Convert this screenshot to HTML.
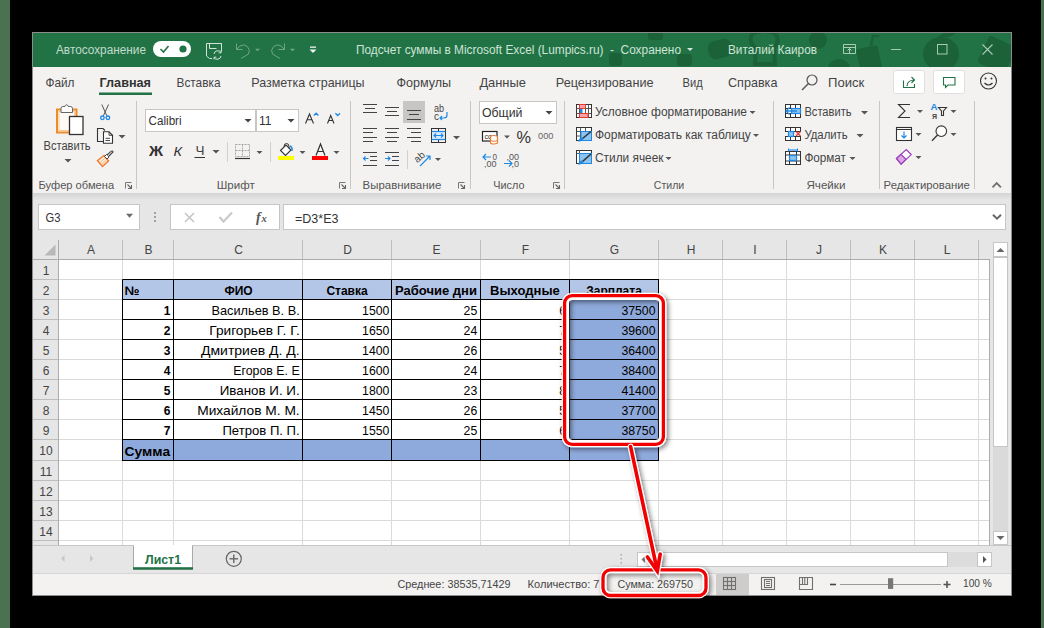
<!DOCTYPE html>
<html><head><meta charset="utf-8"><style>
*{margin:0;padding:0}
html,body{width:1044px;height:628px;overflow:hidden;background:#000}
svg{display:block;font-family:"Liberation Sans",sans-serif}
</style></head><body>
<svg width="1044" height="628" viewBox="0 0 1044 628">
<rect x="0" y="0" width="1044" height="628" fill="#000"/>
<rect x="0" y="0" width="10" height="628" fill="#4a7150"/>
<rect x="1041" y="0" width="3" height="628" fill="#4a7150"/>
<rect x="32" y="32" width="980" height="564" fill="#f3f2f1"/>
<rect x="32.5" y="32.5" width="979" height="563" fill="none" stroke="#8c8c8c"/>
<rect x="33" y="33" width="978" height="34" fill="#217346"/>
<defs><clipPath id="tb"><rect x="33" y="33" width="978" height="34"/></clipPath></defs>
<g clip-path="url(#tb)" fill="#1c6239" opacity="1">
<ellipse cx="941" cy="54" rx="18" ry="17"/>
<path d="M938 37 q8 -7 18 -4 q-6 6 -18 4z"/>
<rect x="858" y="47" width="22" height="24" rx="2" transform="rotate(-12 869 58)"/>
<path d="M871 46 l2 -10 h6" fill="none" stroke="#1c6239" stroke-width="2.5"/>
<ellipse cx="839" cy="68" rx="11" ry="9"/>
<rect x="982" y="40" width="30" height="30" rx="3" transform="rotate(25 997 55)"/>
<circle cx="818" cy="40" r="9"/>
<path d="M752 34 q12 -6 24 0 q4 8 -2 14 l1 16 h-20 l1 -16 q-8 -6 -4 -14z" fill="none" stroke="#1c6239" stroke-width="4"/>
<rect x="708" y="40" width="24" height="18" rx="7" transform="rotate(-15 720 49)"/>
<rect x="648" y="30" width="15" height="10" rx="3"/>
<rect x="677" y="54" width="15" height="12" rx="3"/>
<rect x="609" y="53" width="13" height="13" rx="3"/>
</g>
<text x="56.0" y="53.6" font-size="12" fill="#c3dacb" textLength="90.0" lengthAdjust="spacingAndGlyphs">Автосохранение</text>
<rect x="153" y="41" width="38" height="16" rx="8" fill="#fff"/>
<path d="M160.5 49 L163.5 52 L168.5 46" fill="none" stroke="#217346" stroke-width="1.6"/>
<circle cx="183" cy="49" r="3.6" fill="#217346"/>
<path d="M206.5 52 V43.5 H221.5 V51.5 M206.5 52 V56 L209.5 58.5 H212" fill="none" stroke="#cfe3d6" stroke-width="1"/>
<path d="M209.5 43.5 V48.5 H216.5" fill="none" stroke="#cfe3d6" stroke-width="1"/>
<path d="M221.5 43.5 V48.5" fill="none" stroke="#cfe3d6" stroke-width="1"/>
<path d="M214 54 a3.8 3.8 0 0 1 7 -1.5 M221 50.5 v2.3 h-2.3 M221 56 a3.8 3.8 0 0 1 -7 1.5 M214 59.5 v-2.3 h2.3" fill="none" stroke="#cfe3d6" stroke-width="1"/>
<path d="M236.5 43.5 V49.5 H242.5" fill="none" stroke="#6fa688" stroke-width="1"/>
<path d="M237 49 L240 46 A6 6 0 0 1 248.5 54 L241 58.5" fill="none" stroke="#6fa688" stroke-width="1"/>
<path d="M255 48.8 h5 l-2.5 2.5 z" fill="#6fa688" stroke="none" stroke-width="1"/>
<path d="M284.5 43.5 V49.5 H278.5" fill="none" stroke="#6fa688" stroke-width="1"/>
<path d="M284 49 L281 46 A6 6 0 0 0 272.5 54 L280 58.5" fill="none" stroke="#6fa688" stroke-width="1"/>
<path d="M290 48.8 h5 l-2.5 2.5 z" fill="#6fa688" stroke="none" stroke-width="1"/>
<rect x="310" y="46.5" width="6" height="1.3" fill="#eef5f0"/>
<path d="M309.5 49.5 h7 l-3.5 3.5 z" fill="#eef5f0" stroke="none" stroke-width="1"/>
<text x="356.0" y="53.6" font-size="12" fill="#cfe3d6" textLength="325.0" lengthAdjust="spacingAndGlyphs">Подсчет суммы в Microsoft Excel (Lumpics.ru)  -  Сохранено</text>
<path d="M687 48 h6 l-3 3 z" fill="#d7e6dc" stroke="none" stroke-width="1"/>
<text x="728.0" y="53.6" font-size="12" fill="#cfe3d6" textLength="89.0" lengthAdjust="spacingAndGlyphs">Виталий Каиров</text>
<path d="M843.5 44.5 h12 v9 h-12 z M843.5 47.5 h12" fill="none" stroke="#a9cab5" stroke-width="1"/>
<path d="M849.5 53 v-4.5 M847.5 50.5 l2 -2 l2 2" fill="none" stroke="#a9cab5" stroke-width="1"/>
<line x1="891" y1="49.5" x2="901" y2="49.5" stroke="#a9cab5" stroke-width="1"/>
<rect x="937.5" y="44.5" width="9.5" height="9.5" fill="none" stroke="#a9cab5"/>
<path d="M982.5 44.5 l10 10 M992.5 44.5 l-10 10" fill="none" stroke="#a9cab5" stroke-width="1.1"/>
<text x="45.5" y="87.0" font-size="13" fill="#444" textLength="29.0" lengthAdjust="spacingAndGlyphs">Файл</text>
<text x="99.5" y="87.0" font-size="13" fill="#333" font-weight="bold" textLength="51.5" lengthAdjust="spacingAndGlyphs">Главная</text>
<rect x="99" y="92.5" width="53" height="2.5" fill="#217346"/>
<text x="176.5" y="87.0" font-size="13" fill="#444" textLength="44.0" lengthAdjust="spacingAndGlyphs">Вставка</text>
<text x="251.3" y="87.0" font-size="13" fill="#444" textLength="113.3" lengthAdjust="spacingAndGlyphs">Разметка страницы</text>
<text x="396.4" y="87.0" font-size="13" fill="#444" textLength="54.6" lengthAdjust="spacingAndGlyphs">Формулы</text>
<text x="479.4" y="87.0" font-size="13" fill="#444" textLength="46.5" lengthAdjust="spacingAndGlyphs">Данные</text>
<text x="555.8" y="87.0" font-size="13" fill="#444" textLength="97.7" lengthAdjust="spacingAndGlyphs">Рецензирование</text>
<text x="682.6" y="87.0" font-size="13" fill="#444" textLength="20.2" lengthAdjust="spacingAndGlyphs">Вид</text>
<text x="728.0" y="87.0" font-size="13" fill="#444" textLength="49.4" lengthAdjust="spacingAndGlyphs">Справка</text>
<circle cx="812" cy="80" r="5" fill="none" stroke="#555" stroke-width="1.2"/>
<line x1="808.5" y1="83.5" x2="802" y2="90" stroke="#555" stroke-width="1.4"/>
<text x="828.0" y="87.0" font-size="13" fill="#444" textLength="36.3" lengthAdjust="spacingAndGlyphs">Поиск</text>
<rect x="893.5" y="70.5" width="31" height="23" rx="2" fill="#fff" stroke="#e1dfdd"/>
<rect x="933.5" y="70.5" width="31" height="23" rx="2" fill="#fff" stroke="#e1dfdd"/>
<path d="M903.5 80.5 v7 h11 v-3.5" fill="none" stroke="#217346" stroke-width="1.1"/>
<path d="M907 86 q0.5 -6 7.5 -6 M911.5 77 l3 3 l-3 3" fill="none" stroke="#217346" stroke-width="1.1"/>
<path d="M943.5 77.5 h11.5 v7.5 h-7 l-2.5 2.5 v-2.5 h-2 z" fill="none" stroke="#217346" stroke-width="1.1"/>
<circle cx="988.5" cy="81" r="8" fill="none" stroke="#333" stroke-width="1.1"/>
<circle cx="985.5" cy="78.5" r="1" fill="#333"/><circle cx="991.5" cy="78.5" r="1" fill="#333"/>
<path d="M984.5 83 q4 4 8 0" fill="none" stroke="#333" stroke-width="1.1"/>
<line x1="136.5" y1="101" x2="136.5" y2="189" stroke="#c8c6c4" stroke-width="1"/>
<line x1="350.5" y1="101" x2="350.5" y2="189" stroke="#c8c6c4" stroke-width="1"/>
<line x1="470.5" y1="101" x2="470.5" y2="189" stroke="#c8c6c4" stroke-width="1"/>
<line x1="564.5" y1="101" x2="564.5" y2="189" stroke="#c8c6c4" stroke-width="1"/>
<line x1="773.5" y1="101" x2="773.5" y2="189" stroke="#c8c6c4" stroke-width="1"/>
<line x1="879.5" y1="101" x2="879.5" y2="189" stroke="#c8c6c4" stroke-width="1"/>
<line x1="974.5" y1="101" x2="974.5" y2="189" stroke="#c8c6c4" stroke-width="1"/>
<text x="38.5" y="189.0" font-size="11" fill="#555" textLength="75.6" lengthAdjust="spacingAndGlyphs">Буфер обмена</text>
<text x="216.7" y="189.0" font-size="11" fill="#555" textLength="38.0" lengthAdjust="spacingAndGlyphs">Шрифт</text>
<text x="362.6" y="189.0" font-size="11" fill="#555" textLength="78.7" lengthAdjust="spacingAndGlyphs">Выравнивание</text>
<text x="493.3" y="189.0" font-size="11" fill="#555" textLength="31.2" lengthAdjust="spacingAndGlyphs">Число</text>
<text x="653.8" y="189.0" font-size="11" fill="#555" textLength="30.5" lengthAdjust="spacingAndGlyphs">Стили</text>
<text x="806.4" y="189.0" font-size="11" fill="#555" textLength="39.1" lengthAdjust="spacingAndGlyphs">Ячейки</text>
<text x="883.6" y="189.0" font-size="11" fill="#555" textLength="86.3" lengthAdjust="spacingAndGlyphs">Редактирование</text>
<path d="M125.5 188.5 V182.5 H131.5" fill="none" stroke="#777" stroke-width="1"/>
<path d="M127.5 184.5 L131 188 M131.5 185 V188.5 H128" fill="none" stroke="#666" stroke-width="1.1"/>
<path d="M339.5 188.5 V182.5 H345.5" fill="none" stroke="#777" stroke-width="1"/>
<path d="M341.5 184.5 L345 188 M345.5 185 V188.5 H342" fill="none" stroke="#666" stroke-width="1.1"/>
<path d="M458.5 188.5 V182.5 H464.5" fill="none" stroke="#777" stroke-width="1"/>
<path d="M460.5 184.5 L464 188 M464.5 185 V188.5 H461" fill="none" stroke="#666" stroke-width="1.1"/>
<path d="M553.5 188.5 V182.5 H559.5" fill="none" stroke="#777" stroke-width="1"/>
<path d="M555.5 184.5 L559 188 M559.5 185 V188.5 H556" fill="none" stroke="#666" stroke-width="1.1"/>
<path d="M992.5 187.3 l4.2 -4.2 l4.2 4.2" fill="none" stroke="#707070" stroke-width="1.8"/>
<rect x="57" y="109.5" width="19.5" height="23" fill="#fefaf4" stroke="#ed8b29" stroke-width="2"/>
<rect x="59" y="111.5" width="15.5" height="19" fill="none" stroke="#f9c98f" stroke-width="1"/>
<path d="M61 112.5 v-4 q0 -2 2 -2 h2 a1.6 1.6 0 0 1 3.2 0 h2.3 q2 0 2 2 v4 z" fill="#fff" stroke="#666" stroke-width="1"/>
<rect x="69.5" y="116.5" width="13.5" height="18" fill="#fff" stroke="#333" stroke-width="1.3"/>
<text x="43.5" y="150.0" font-size="12" fill="#444" textLength="47.0" lengthAdjust="spacingAndGlyphs">Вставить</text>
<path d="M64.5 159 h7 l-3.5 3.5 z" fill="#555" stroke="none" stroke-width="1"/>
<path d="M101.8 104.5 L106.8 115.8 M108.5 104.5 L103.4 115.8" fill="none" stroke="#555" stroke-width="1"/>
<circle cx="102.4" cy="117.8" r="1.8" fill="none" stroke="#1e88e5" stroke-width="1.3"/>
<circle cx="107.9" cy="117.8" r="1.8" fill="none" stroke="#1e88e5" stroke-width="1.3"/>
<path d="M103.5 141.5 h-6 v-13 h5.5 l2 2" fill="none" stroke="#333" stroke-width="1.1"/>
<path d="M103.5 131.8 h5.5 l3.5 3.5 v8 h-9 z" fill="#fff" stroke="#333" stroke-width="1.1"/>
<path d="M109 131.8 v3.5 h3.5" fill="none" stroke="#333" stroke-width="0.9"/>
<line x1="105.5" y1="138.3" x2="110" y2="138.3" stroke="#333" stroke-width="0.9"/>
<line x1="105.5" y1="140.5" x2="110" y2="140.5" stroke="#333" stroke-width="0.9"/>
<path d="M118.5 135 h7 l-3.5 3.5 z" fill="#555" stroke="none" stroke-width="1"/>
<path d="M97.5 160.5 L104 155.5 L108.5 161 L102.5 166.5 Z" fill="#fde9d2" stroke="#ed7d31" stroke-width="1.4"/>
<path d="M100.5 162 L104.5 158.5 M102 164 L106 160.5" fill="none" stroke="#f4b183" stroke-width="0.9"/>
<path d="M104.5 156.5 L106.5 154.5 L109 157 L107 159 Z" fill="#fff" stroke="#444" stroke-width="1"/>
<path d="M107 155 L111.3 151.2 Q112.8 150.6 113 152 L108.5 156.5" fill="#fff" stroke="#444" stroke-width="1.1"/>
<rect x="145.5" y="109.5" width="110" height="22" fill="#fff" stroke="#c8c6c4"/>
<rect x="256.5" y="109.5" width="42" height="22" fill="#fff" stroke="#c8c6c4"/>
<text x="148.6" y="125.0" font-size="12" fill="#333" textLength="33.0" lengthAdjust="spacingAndGlyphs">Calibri</text>
<text x="259.0" y="125.0" font-size="12" fill="#333" textLength="12.5" lengthAdjust="spacingAndGlyphs">11</text>
<path d="M244.5 119 h7 l-3.5 3.5 z" fill="#444" stroke="none" stroke-width="1"/>
<path d="M287.5 119 h7 l-3.5 3.5 z" fill="#444" stroke="none" stroke-width="1"/>
<path d="M305.5 123.5 L309.5 114 L313.5 123.5 M307 119.8 H312" fill="none" stroke="#333" stroke-width="1.1"/>
<path d="M313.8 115.5 l2.3 -2.3 l2.3 2.3" fill="none" stroke="#1e88e5" stroke-width="1.3"/>
<path d="M327.5 123.5 L330.7 115.5 L334 123.5 M328.7 120.5 H332.7" fill="none" stroke="#333" stroke-width="1.1"/>
<path d="M335.4 113.2 l2.3 2.3 l2.3 -2.3" fill="none" stroke="#1e88e5" stroke-width="1.3"/>
<text x="149.0" y="156.0" font-size="14" fill="#333" font-weight="bold" textLength="14.0" lengthAdjust="spacingAndGlyphs">Ж</text>
<text x="173.5" y="156.0" font-size="13.5" fill="#333" textLength="8.5" lengthAdjust="spacingAndGlyphs" font-style="italic">К</text>
<text x="195.5" y="154.5" font-size="13" fill="#444" textLength="9.0" lengthAdjust="spacingAndGlyphs">Ч</text>
<line x1="194.5" y1="157.5" x2="205" y2="157.5" stroke="#333" stroke-width="1"/>
<path d="M212.5 150 h7 l-3.5 3.5 z" fill="#555" stroke="none" stroke-width="1"/>
<line x1="227.5" y1="142" x2="227.5" y2="162" stroke="#d2d0ce" stroke-width="1"/>
<rect x="235.5" y="144.5" width="14" height="12" fill="none" stroke="#a6a6a6" stroke-dasharray="2 1"/>
<line x1="242.5" y1="144.5" x2="242.5" y2="156.5" stroke="#a6a6a6" stroke-width="1" stroke-dasharray="2 1"/>
<line x1="235.5" y1="150.5" x2="249.5" y2="150.5" stroke="#a6a6a6" stroke-width="1" stroke-dasharray="2 1"/>
<line x1="235" y1="158.5" x2="250" y2="158.5" stroke="#333" stroke-width="1.2"/>
<path d="M256.5 151 h6 l-3 3 z" fill="#555" stroke="none" stroke-width="1"/>
<line x1="270.5" y1="142" x2="270.5" y2="162" stroke="#d2d0ce" stroke-width="1"/>
<path d="M280.5 150.5 L286 145 L291 150 L285.5 155.5 Z" fill="#fff" stroke="#333" stroke-width="1.1"/>
<path d="M284 146.5 q0 -3 2.5 -3 q2.5 0 2.5 3 v2" fill="none" stroke="#333" stroke-width="1"/>
<path d="M290 146 q2.5 1 2 5" fill="none" stroke="#1e88e5" stroke-width="1.5"/>
<rect x="278" y="156" width="16" height="4" fill="#ffff00"/>
<path d="M299.5 151 h6 l-3 3 z" fill="#555" stroke="none" stroke-width="1"/>
<path d="M316 155.5 L320.5 144 L325 155.5 M317.5 151.5 H323.5" fill="none" stroke="#333" stroke-width="1.2"/>
<rect x="312" y="156" width="16" height="4" fill="#ff0000"/>
<path d="M333.5 151 h6 l-3 3 z" fill="#555" stroke="none" stroke-width="1"/>
<line x1="363" y1="104.5" x2="377" y2="104.5" stroke="#444" stroke-width="1"/>
<line x1="365" y1="108.5" x2="375" y2="108.5" stroke="#444" stroke-width="1"/>
<line x1="363" y1="112.5" x2="377" y2="112.5" stroke="#444" stroke-width="1"/>
<line x1="385" y1="107.5" x2="399" y2="107.5" stroke="#444" stroke-width="1"/>
<line x1="387" y1="111.5" x2="397" y2="111.5" stroke="#444" stroke-width="1"/>
<line x1="385" y1="115.5" x2="399" y2="115.5" stroke="#444" stroke-width="1"/>
<rect x="403" y="101" width="22" height="22" fill="#c8c6c4"/>
<line x1="407" y1="110.5" x2="421" y2="110.5" stroke="#444" stroke-width="1"/>
<line x1="409" y1="114.5" x2="419" y2="114.5" stroke="#444" stroke-width="1"/>
<line x1="407" y1="119.5" x2="421" y2="119.5" stroke="#444" stroke-width="1"/>
<text x="434.0" y="112.0" font-size="10" fill="#444" textLength="10.0" lengthAdjust="spacingAndGlyphs">ab</text>
<text x="434.0" y="120.0" font-size="10" fill="#444" textLength="5.0" lengthAdjust="spacingAndGlyphs">c</text>
<path d="M447 112 v3 q0 3 -3 3 h-4 M442 116 l-2 2 l2 2" fill="none" stroke="#1e88e5" stroke-width="1.2"/>
<line x1="363" y1="128.5" x2="377" y2="128.5" stroke="#444" stroke-width="1"/>
<line x1="363" y1="132.5" x2="373" y2="132.5" stroke="#444" stroke-width="1"/>
<line x1="363" y1="137.5" x2="377" y2="137.5" stroke="#444" stroke-width="1"/>
<line x1="363" y1="141.5" x2="373" y2="141.5" stroke="#444" stroke-width="1"/>
<line x1="385" y1="128.5" x2="399" y2="128.5" stroke="#444" stroke-width="1"/>
<line x1="387" y1="132.5" x2="397" y2="132.5" stroke="#444" stroke-width="1"/>
<line x1="385" y1="137.5" x2="399" y2="137.5" stroke="#444" stroke-width="1"/>
<line x1="387" y1="141.5" x2="397" y2="141.5" stroke="#444" stroke-width="1"/>
<line x1="407" y1="128.5" x2="421" y2="128.5" stroke="#444" stroke-width="1"/>
<line x1="411" y1="132.5" x2="421" y2="132.5" stroke="#444" stroke-width="1"/>
<line x1="407" y1="137.5" x2="421" y2="137.5" stroke="#444" stroke-width="1"/>
<line x1="411" y1="141.5" x2="421" y2="141.5" stroke="#444" stroke-width="1"/>
<rect x="432" y="131.5" width="13.5" height="8" fill="#d6eaf8"/>
<rect x="431.5" y="128.5" width="14" height="14" fill="none" stroke="#333" stroke-width="1"/>
<line x1="431.5" y1="131.5" x2="445.5" y2="131.5" stroke="#1e88e5" stroke-width="1.2"/>
<line x1="431.5" y1="139.5" x2="445.5" y2="139.5" stroke="#1e88e5" stroke-width="1.2"/>
<line x1="438.5" y1="128.5" x2="438.5" y2="131" stroke="#333" stroke-width="1"/>
<line x1="438.5" y1="140" x2="438.5" y2="142.5" stroke="#333" stroke-width="1"/>
<path d="M434 135.5 h9 M436 133.5 l-2 2 l2 2 M441 133.5 l2 2 l-2 2" fill="none" stroke="#1e88e5" stroke-width="1.1"/>
<path d="M453 136 h7 l-3.5 3.5 z" fill="#555" stroke="none" stroke-width="1"/>
<line x1="363" y1="152.5" x2="377" y2="152.5" stroke="#444" stroke-width="1"/>
<line x1="370" y1="156.5" x2="377" y2="156.5" stroke="#444" stroke-width="1"/>
<line x1="370" y1="160.5" x2="377" y2="160.5" stroke="#444" stroke-width="1"/>
<line x1="363" y1="165.5" x2="377" y2="165.5" stroke="#444" stroke-width="1"/>
<path d="M368.5 158.5 h-5 M365.5 156.5 l-2 2 l2 2" fill="none" stroke="#1e88e5" stroke-width="1.1"/>
<line x1="385" y1="152.5" x2="399" y2="152.5" stroke="#444" stroke-width="1"/>
<line x1="392" y1="156.5" x2="399" y2="156.5" stroke="#444" stroke-width="1"/>
<line x1="392" y1="160.5" x2="399" y2="160.5" stroke="#444" stroke-width="1"/>
<line x1="385" y1="165.5" x2="399" y2="165.5" stroke="#444" stroke-width="1"/>
<path d="M385 158.5 h5 M388 156.5 l2 2 l-2 2" fill="none" stroke="#1e88e5" stroke-width="1.1"/>
<line x1="407.5" y1="150" x2="407.5" y2="169" stroke="#d2d0ce" stroke-width="1"/>
<text x="414" y="160" font-size="10" fill="#444" transform="rotate(-40 420 157)">ab</text>
<path d="M420 166 l10 -10 M426 156 h4 v4" fill="none" stroke="#1e88e5" stroke-width="1.2"/>
<path d="M435 158 h6 l-3 3 z" fill="#555" stroke="none" stroke-width="1"/>
<rect x="479.5" y="101.5" width="77" height="22" fill="#fff" stroke="#c8c6c4"/>
<text x="482.0" y="117.0" font-size="12" fill="#333" textLength="40.5" lengthAdjust="spacingAndGlyphs">Общий</text>
<path d="M545.5 111 h7 l-3.5 3.5 z" fill="#444" stroke="none" stroke-width="1"/>
<rect x="482.5" y="131.5" width="14.5" height="9.5" fill="#fff" stroke="#222" stroke-width="1.2"/>
<text x="484.5" y="139.0" font-size="8" fill="#222" textLength="11.0" lengthAdjust="spacingAndGlyphs">cco</text>
<path d="M490.5 137 a3.5 1.5 0 0 1 7 0 v5.5 a3.5 1.5 0 0 1 -7 0 z" fill="#fff" stroke="#ed7d31" stroke-width="1.2"/>
<path d="M490.5 139.8 a3.5 1.5 0 0 0 7 0" fill="none" stroke="#ed7d31" stroke-width="1"/>
<path d="M504 135.5 h6 l-3 3 z" fill="#555" stroke="none" stroke-width="1"/>
<text x="516.5" y="142.5" font-size="16" fill="#333" textLength="14.5" lengthAdjust="spacingAndGlyphs">%</text>
<text x="538.0" y="139.0" font-size="9" fill="#666" textLength="15.5" lengthAdjust="spacingAndGlyphs">000</text>
<path d="M491 157 h-8 M486 154 l-3 3 l3 3" fill="none" stroke="#1e88e5" stroke-width="1.2"/>
<text x="492.5" y="159.5" font-size="9" fill="#555" textLength="4.5" lengthAdjust="spacingAndGlyphs">0</text>
<text x="484.0" y="167.0" font-size="9" fill="#555" textLength="12.5" lengthAdjust="spacingAndGlyphs">,00</text>
<text x="506.5" y="159.5" font-size="9" fill="#555" textLength="12.5" lengthAdjust="spacingAndGlyphs">,00</text>
<path d="M504 163.5 h8 M509 160.5 l3 3 l-3 3" fill="none" stroke="#1e88e5" stroke-width="1.2"/>
<text x="511.5" y="167.0" font-size="9" fill="#555" textLength="7.5" lengthAdjust="spacingAndGlyphs">,0</text>
<rect x="576.5" y="104.5" width="15" height="13" fill="#fff" stroke="#333" stroke-width="1"/>
<line x1="579.5" y1="104.5" x2="579.5" y2="117.5" stroke="#555" stroke-width="1"/>
<line x1="585.5" y1="104.5" x2="585.5" y2="117.5" stroke="#555" stroke-width="1"/>
<line x1="588.5" y1="104.5" x2="588.5" y2="117.5" stroke="#555" stroke-width="1"/>
<line x1="576.5" y1="108.5" x2="591.5" y2="108.5" stroke="#555" stroke-width="1"/>
<line x1="576.5" y1="113.5" x2="591.5" y2="113.5" stroke="#555" stroke-width="1"/>
<rect x="579.5" y="104.5" width="6" height="4" fill="#f5a3a3" stroke="#e53935" stroke-width="1"/>
<rect x="579.5" y="113.5" width="8.5" height="4" fill="#f5a3a3" stroke="#e53935" stroke-width="1"/>
<rect x="580" y="109" width="2.5" height="4" fill="#1e88e5"/>
<text x="595.0" y="116.3" font-size="12" fill="#444" textLength="152.0" lengthAdjust="spacingAndGlyphs">Условное форматирование</text>
<path d="M749.5 111 h6 l-3 3 z" fill="#555" stroke="none" stroke-width="1"/>
<rect x="576.5" y="127.5" width="15" height="13" fill="#fff" stroke="#333" stroke-width="1"/>
<line x1="580.5" y1="127.5" x2="580.5" y2="140.5" stroke="#555" stroke-width="1"/>
<line x1="585.5" y1="127.5" x2="585.5" y2="140.5" stroke="#555" stroke-width="1"/>
<line x1="576.5" y1="131.5" x2="591.5" y2="131.5" stroke="#555" stroke-width="1"/>
<line x1="576.5" y1="136" x2="591.5" y2="136" stroke="#555" stroke-width="1"/>
<rect x="581" y="131.5" width="10.5" height="9" fill="#8cc3f0" stroke="#1e88e5" stroke-width="1"/>
<path d="M591 131.5 L582 139" fill="none" stroke="#333" stroke-width="1.6"/>
<path d="M578 141.5 q1 -4 4.5 -4 l1 1 q-1 3.5 -5.5 3z" fill="#1e88e5" stroke="none" stroke-width="1"/>
<text x="595.0" y="139.3" font-size="12" fill="#444" textLength="155.8" lengthAdjust="spacingAndGlyphs">Форматировать как таблицу</text>
<path d="M753 134 h6 l-3 3 z" fill="#555" stroke="none" stroke-width="1"/>
<rect x="576.5" y="150.5" width="15" height="13" fill="#fff" stroke="#333" stroke-width="1"/>
<line x1="579.5" y1="150.5" x2="579.5" y2="163.5" stroke="#555" stroke-width="1"/>
<line x1="576.5" y1="153.5" x2="591.5" y2="153.5" stroke="#555" stroke-width="1"/>
<rect x="579.5" y="153.5" width="12" height="10" fill="#8cc3f0" stroke="#1e88e5" stroke-width="1"/>
<path d="M591 154 L582 162" fill="none" stroke="#333" stroke-width="1.6"/>
<path d="M578 164.5 q1 -4 4.5 -4 l1 1 q-1 3.5 -5.5 3z" fill="#1e88e5" stroke="none" stroke-width="1"/>
<text x="595.0" y="162.3" font-size="12" fill="#444" textLength="68.5" lengthAdjust="spacingAndGlyphs">Стили ячеек</text>
<path d="M665.5 157 h6 l-3 3 z" fill="#555" stroke="none" stroke-width="1"/>
<rect x="785.5" y="104.5" width="15" height="13" fill="#fff" stroke="#333" stroke-width="1"/>
<line x1="785.5" y1="108.5" x2="800.5" y2="108.5" stroke="#333" stroke-width="1"/>
<line x1="785.5" y1="113.5" x2="800.5" y2="113.5" stroke="#333" stroke-width="1"/>
<line x1="790.5" y1="104.5" x2="790.5" y2="117.5" stroke="#333" stroke-width="1"/>
<line x1="795.5" y1="104.5" x2="795.5" y2="117.5" stroke="#333" stroke-width="1"/>
<rect x="791.5" y="108.5" width="9" height="5" fill="#8cc3f0" stroke="#1e88e5" stroke-width="1.2"/>
<rect x="786" y="109" width="5" height="4" fill="#fff"/>
<path d="M797 111 h-11 M789.5 107.5 l-3.5 3.5 l3.5 3.5" fill="none" stroke="#1e88e5" stroke-width="1.3"/>
<text x="804.4" y="116.3" font-size="12" fill="#444" textLength="47.2" lengthAdjust="spacingAndGlyphs">Вставить</text>
<path d="M861 111 h7 l-3.5 3.5 z" fill="#555" stroke="none" stroke-width="1"/>
<rect x="785.5" y="127.5" width="15" height="13" fill="#fff" stroke="#333" stroke-width="1"/>
<line x1="785.5" y1="131.5" x2="800.5" y2="131.5" stroke="#333" stroke-width="1"/>
<line x1="785.5" y1="136.5" x2="800.5" y2="136.5" stroke="#333" stroke-width="1"/>
<line x1="790.5" y1="127.5" x2="790.5" y2="131.5" stroke="#333" stroke-width="1"/>
<line x1="795.5" y1="127.5" x2="795.5" y2="131.5" stroke="#333" stroke-width="1"/>
<line x1="790.5" y1="136.5" x2="790.5" y2="140.5" stroke="#333" stroke-width="1"/>
<line x1="795.5" y1="136.5" x2="795.5" y2="140.5" stroke="#333" stroke-width="1"/>
<rect x="785" y="132" width="16" height="4" fill="#f3f2f1"/>
<rect x="788.5" y="131.5" width="5" height="5" fill="#8cc3f0" stroke="#1e88e5" stroke-width="1.2"/>
<path d="M796 131.5 l4.5 4.5 M800.5 131.5 l-4.5 4.5" fill="none" stroke="#e53935" stroke-width="1.2"/>
<text x="804.4" y="139.3" font-size="12" fill="#444" textLength="43.3" lengthAdjust="spacingAndGlyphs">Удалить</text>
<path d="M856.5 134 h7 l-3.5 3.5 z" fill="#555" stroke="none" stroke-width="1"/>
<rect x="785.5" y="151.5" width="15" height="13" fill="#fff" stroke="#333" stroke-width="1"/>
<line x1="785.5" y1="155" x2="800.5" y2="155" stroke="#333" stroke-width="1"/>
<line x1="785.5" y1="161" x2="800.5" y2="161" stroke="#333" stroke-width="1"/>
<line x1="789.5" y1="151.5" x2="789.5" y2="164.5" stroke="#333" stroke-width="1"/>
<line x1="796.5" y1="151.5" x2="796.5" y2="164.5" stroke="#333" stroke-width="1"/>
<rect x="789.5" y="155.5" width="7" height="5" fill="#8cc3f0" stroke="#1e88e5" stroke-width="1.2"/>
<line x1="788.5" y1="150" x2="797.5" y2="150" stroke="#1e88e5" stroke-width="1.1"/>
<line x1="788.5" y1="148.5" x2="788.5" y2="151.5" stroke="#1e88e5" stroke-width="1"/>
<line x1="797.5" y1="148.5" x2="797.5" y2="151.5" stroke="#1e88e5" stroke-width="1"/>
<text x="804.4" y="162.3" font-size="12" fill="#444" textLength="41.6" lengthAdjust="spacingAndGlyphs">Формат</text>
<path d="M849.5 157 h6 l-3 3 z" fill="#555" stroke="none" stroke-width="1"/>
<path d="M910 104.5 H898.5 L905 111 L898.5 117.5 H910" fill="none" stroke="#333" stroke-width="1.1"/>
<path d="M917 110 h6 l-3 3 z" fill="#555" stroke="none" stroke-width="1"/>
<text x="930.5" y="110.0" font-size="8.5" fill="#1e88e5" font-weight="bold" textLength="7.0" lengthAdjust="spacingAndGlyphs">A</text>
<text x="932.0" y="119.0" font-size="8" fill="#444" font-weight="bold" textLength="5.0" lengthAdjust="spacingAndGlyphs">Я</text>
<path d="M938.5 107.5 h8 l-3 3.5 v4.5 h-2 v-4.5 z" fill="none" stroke="#333" stroke-width="1.1"/>
<path d="M950.5 110 h6 l-3 3 z" fill="#555" stroke="none" stroke-width="1"/>
<rect x="896.5" y="127.5" width="15" height="13" fill="#fff" stroke="#333" stroke-width="1.1"/>
<line x1="896.5" y1="129.5" x2="911.5" y2="129.5" stroke="#333" stroke-width="1"/>
<path d="M904 131.5 v6.5 M901.5 135.5 l2.5 2.5 l2.5 -2.5" fill="none" stroke="#1e88e5" stroke-width="1.2"/>
<path d="M915.5 133 h6 l-3 3 z" fill="#555" stroke="none" stroke-width="1"/>
<circle cx="941.3" cy="131.2" r="5.3" fill="#fff" stroke="#333" stroke-width="1.1"/>
<line x1="937.5" y1="135" x2="932" y2="140.8" stroke="#333" stroke-width="1.3"/>
<path d="M950.5 133 h6 l-3 3 z" fill="#555" stroke="none" stroke-width="1"/>
<path d="M896.5 158.5 L906.2 149.6 L911.2 154.6 L901.1 164.2 Z" fill="#fff" stroke="#9b3fb8" stroke-width="1.2"/>
<path d="M896.5 158.5 L901 154.3 L906 159.3 L901.1 164.2 Z" fill="#d9a6e6" stroke="#9b3fb8" stroke-width="1.2"/>
<path d="M915.5 156 h6 l-3 3 z" fill="#555" stroke="none" stroke-width="1"/>
<rect x="33" y="193" width="978" height="47" fill="#e6e6e6"/>
<defs><linearGradient id="rs" x1="0" y1="0" x2="0" y2="1"><stop offset="0" stop-color="#d4d4d4"/><stop offset="1" stop-color="#e6e6e6"/></linearGradient></defs>
<rect x="33" y="193" width="978" height="7" fill="url(#rs)"/>
<rect x="38.5" y="204.5" width="101" height="25" fill="#fff" stroke="#c6c6c6"/>
<text x="45.5" y="221.5" font-size="12" fill="#333" textLength="15.0" lengthAdjust="spacingAndGlyphs">G3</text>
<path d="M126 213.8 h7 l-3.5 4 z" fill="#6a6a6a" stroke="none" stroke-width="1"/>
<rect x="154" y="212" width="2" height="2" fill="#a0a0a0"/>
<rect x="154" y="216" width="2" height="2" fill="#a0a0a0"/>
<rect x="154" y="220" width="2" height="2" fill="#a0a0a0"/>
<rect x="170.5" y="204.5" width="109" height="25" fill="#fff" stroke="#c6c6c6"/>
<path d="M185 213 l9 9 M194 213 l-9 9" fill="none" stroke="#c4c4c4" stroke-width="1.5"/>
<path d="M219.5 217 l4 4.5 l8.5 -9" fill="none" stroke="#cacaca" stroke-width="2.2"/>
<text x="256.0" y="221.5" font-size="14" fill="#555" font-style="italic" font-weight="bold" font-family="Liberation Serif">f</text>
<text x="261.5" y="221.5" font-size="10.5" fill="#555" font-style="italic" font-weight="bold" font-family="Liberation Serif">x</text>
<rect x="283.5" y="204.5" width="722" height="25" fill="#fff" stroke="#c6c6c6"/>
<text x="295.0" y="222.5" font-size="12" fill="#333" textLength="43.5" lengthAdjust="spacingAndGlyphs">=D3*E3</text>
<path d="M993 214.8 l4 3.8 l4 -3.8" fill="none" stroke="#666" stroke-width="1.9"/>
<rect x="33" y="240" width="957" height="305" fill="#fff"/>
<rect x="33" y="240" width="957" height="20" fill="#e6e6e6"/>
<rect x="33" y="240" width="26" height="305" fill="#e6e6e6"/>
<path d="M55.5 244.5 v11 h-11 z" fill="#b8b8b8" stroke="none" stroke-width="1"/>
<line x1="59" y1="259.5" x2="990" y2="259.5" stroke="#dadada" stroke-width="1"/>
<line x1="59" y1="279.5" x2="990" y2="279.5" stroke="#dadada" stroke-width="1"/>
<line x1="59" y1="299.5" x2="990" y2="299.5" stroke="#dadada" stroke-width="1"/>
<line x1="59" y1="319.5" x2="990" y2="319.5" stroke="#dadada" stroke-width="1"/>
<line x1="59" y1="339.5" x2="990" y2="339.5" stroke="#dadada" stroke-width="1"/>
<line x1="59" y1="359.5" x2="990" y2="359.5" stroke="#dadada" stroke-width="1"/>
<line x1="59" y1="379.5" x2="990" y2="379.5" stroke="#dadada" stroke-width="1"/>
<line x1="59" y1="399.5" x2="990" y2="399.5" stroke="#dadada" stroke-width="1"/>
<line x1="59" y1="419.5" x2="990" y2="419.5" stroke="#dadada" stroke-width="1"/>
<line x1="59" y1="439.5" x2="990" y2="439.5" stroke="#dadada" stroke-width="1"/>
<line x1="59" y1="460.5" x2="990" y2="460.5" stroke="#dadada" stroke-width="1"/>
<line x1="59" y1="480.5" x2="990" y2="480.5" stroke="#dadada" stroke-width="1"/>
<line x1="59" y1="500.5" x2="990" y2="500.5" stroke="#dadada" stroke-width="1"/>
<line x1="59" y1="520.5" x2="990" y2="520.5" stroke="#dadada" stroke-width="1"/>
<line x1="59" y1="540.5" x2="990" y2="540.5" stroke="#dadada" stroke-width="1"/>
<line x1="122.5" y1="260" x2="122.5" y2="545" stroke="#dadada" stroke-width="1"/>
<line x1="173.5" y1="260" x2="173.5" y2="545" stroke="#dadada" stroke-width="1"/>
<line x1="302.5" y1="260" x2="302.5" y2="545" stroke="#dadada" stroke-width="1"/>
<line x1="391.5" y1="260" x2="391.5" y2="545" stroke="#dadada" stroke-width="1"/>
<line x1="480.5" y1="260" x2="480.5" y2="545" stroke="#dadada" stroke-width="1"/>
<line x1="569.5" y1="260" x2="569.5" y2="545" stroke="#dadada" stroke-width="1"/>
<line x1="658.5" y1="260" x2="658.5" y2="545" stroke="#dadada" stroke-width="1"/>
<line x1="722.5" y1="260" x2="722.5" y2="545" stroke="#dadada" stroke-width="1"/>
<line x1="786.5" y1="260" x2="786.5" y2="545" stroke="#dadada" stroke-width="1"/>
<line x1="850.5" y1="260" x2="850.5" y2="545" stroke="#dadada" stroke-width="1"/>
<line x1="914.5" y1="260" x2="914.5" y2="545" stroke="#dadada" stroke-width="1"/>
<line x1="978.5" y1="260" x2="978.5" y2="545" stroke="#dadada" stroke-width="1"/>
<line x1="122.5" y1="240" x2="122.5" y2="259" stroke="#bdbdbd" stroke-width="1"/>
<line x1="173.5" y1="240" x2="173.5" y2="259" stroke="#bdbdbd" stroke-width="1"/>
<line x1="302.5" y1="240" x2="302.5" y2="259" stroke="#bdbdbd" stroke-width="1"/>
<line x1="391.5" y1="240" x2="391.5" y2="259" stroke="#bdbdbd" stroke-width="1"/>
<line x1="480.5" y1="240" x2="480.5" y2="259" stroke="#bdbdbd" stroke-width="1"/>
<line x1="569.5" y1="240" x2="569.5" y2="259" stroke="#bdbdbd" stroke-width="1"/>
<line x1="658.5" y1="240" x2="658.5" y2="259" stroke="#bdbdbd" stroke-width="1"/>
<line x1="722.5" y1="240" x2="722.5" y2="259" stroke="#bdbdbd" stroke-width="1"/>
<line x1="786.5" y1="240" x2="786.5" y2="259" stroke="#bdbdbd" stroke-width="1"/>
<line x1="850.5" y1="240" x2="850.5" y2="259" stroke="#bdbdbd" stroke-width="1"/>
<line x1="914.5" y1="240" x2="914.5" y2="259" stroke="#bdbdbd" stroke-width="1"/>
<line x1="978.5" y1="240" x2="978.5" y2="259" stroke="#bdbdbd" stroke-width="1"/>
<line x1="33" y1="259.5" x2="990" y2="259.5" stroke="#ababab" stroke-width="1"/>
<line x1="58.5" y1="240" x2="58.5" y2="545" stroke="#ababab" stroke-width="1"/>
<line x1="33" y1="279.5" x2="58" y2="279.5" stroke="#bdbdbd" stroke-width="1"/>
<line x1="33" y1="299.5" x2="58" y2="299.5" stroke="#bdbdbd" stroke-width="1"/>
<line x1="33" y1="319.5" x2="58" y2="319.5" stroke="#bdbdbd" stroke-width="1"/>
<line x1="33" y1="339.5" x2="58" y2="339.5" stroke="#bdbdbd" stroke-width="1"/>
<line x1="33" y1="359.5" x2="58" y2="359.5" stroke="#bdbdbd" stroke-width="1"/>
<line x1="33" y1="379.5" x2="58" y2="379.5" stroke="#bdbdbd" stroke-width="1"/>
<line x1="33" y1="399.5" x2="58" y2="399.5" stroke="#bdbdbd" stroke-width="1"/>
<line x1="33" y1="419.5" x2="58" y2="419.5" stroke="#bdbdbd" stroke-width="1"/>
<line x1="33" y1="439.5" x2="58" y2="439.5" stroke="#bdbdbd" stroke-width="1"/>
<line x1="33" y1="460.5" x2="58" y2="460.5" stroke="#bdbdbd" stroke-width="1"/>
<line x1="33" y1="480.5" x2="58" y2="480.5" stroke="#bdbdbd" stroke-width="1"/>
<line x1="33" y1="500.5" x2="58" y2="500.5" stroke="#bdbdbd" stroke-width="1"/>
<line x1="33" y1="520.5" x2="58" y2="520.5" stroke="#bdbdbd" stroke-width="1"/>
<line x1="33" y1="540.5" x2="58" y2="540.5" stroke="#bdbdbd" stroke-width="1"/>
<text x="87.0" y="254.0" font-size="12" fill="#444">A</text>
<text x="144.5" y="254.0" font-size="12" fill="#444">B</text>
<text x="234.2" y="254.0" font-size="12" fill="#444">C</text>
<text x="343.2" y="254.0" font-size="12" fill="#444">D</text>
<text x="432.5" y="254.0" font-size="12" fill="#444">E</text>
<text x="521.8" y="254.0" font-size="12" fill="#444">F</text>
<text x="609.8" y="254.0" font-size="12" fill="#444">G</text>
<text x="686.7" y="254.0" font-size="12" fill="#444">H</text>
<text x="753.3" y="254.0" font-size="12" fill="#444">I</text>
<text x="816.0" y="254.0" font-size="12" fill="#444">J</text>
<text x="879.0" y="254.0" font-size="12" fill="#444">K</text>
<text x="943.7" y="254.0" font-size="12" fill="#444">L</text>
<text x="42.7" y="275.0" font-size="12" fill="#444">1</text>
<text x="42.7" y="295.0" font-size="12" fill="#444">2</text>
<text x="42.7" y="315.0" font-size="12" fill="#444">3</text>
<text x="42.7" y="335.0" font-size="12" fill="#444">4</text>
<text x="42.7" y="355.0" font-size="12" fill="#444">5</text>
<text x="42.7" y="375.0" font-size="12" fill="#444">6</text>
<text x="42.7" y="395.0" font-size="12" fill="#444">7</text>
<text x="42.7" y="415.0" font-size="12" fill="#444">8</text>
<text x="42.7" y="435.0" font-size="12" fill="#444">9</text>
<text x="39.3" y="455.0" font-size="12" fill="#444">10</text>
<text x="39.8" y="476.0" font-size="12" fill="#444">11</text>
<text x="39.3" y="496.0" font-size="12" fill="#444">12</text>
<text x="39.3" y="516.0" font-size="12" fill="#444">13</text>
<text x="39.3" y="536.0" font-size="12" fill="#444">14</text>
<line x1="989.5" y1="260" x2="989.5" y2="545" stroke="#ababab" stroke-width="1"/>
<line x1="33" y1="545.5" x2="990" y2="545.5" stroke="#ababab" stroke-width="1"/>
<rect x="123" y="280" width="536" height="20" fill="#b4c6e7"/>
<rect x="123" y="440" width="536" height="21" fill="#8ea9db"/>
<rect x="570" y="300" width="89" height="140" fill="#8ea9db"/>
<line x1="122.5" y1="279.5" x2="659" y2="279.5" stroke="#000" stroke-width="1"/>
<line x1="122.5" y1="299.5" x2="659" y2="299.5" stroke="#000" stroke-width="1"/>
<line x1="122.5" y1="319.5" x2="659" y2="319.5" stroke="#000" stroke-width="1"/>
<line x1="122.5" y1="339.5" x2="659" y2="339.5" stroke="#000" stroke-width="1"/>
<line x1="122.5" y1="359.5" x2="659" y2="359.5" stroke="#000" stroke-width="1"/>
<line x1="122.5" y1="379.5" x2="659" y2="379.5" stroke="#000" stroke-width="1"/>
<line x1="122.5" y1="399.5" x2="659" y2="399.5" stroke="#000" stroke-width="1"/>
<line x1="122.5" y1="419.5" x2="659" y2="419.5" stroke="#000" stroke-width="1"/>
<line x1="122.5" y1="439.5" x2="659" y2="439.5" stroke="#000" stroke-width="1"/>
<line x1="122" y1="460.5" x2="659" y2="460.5" stroke="#000" stroke-width="1"/>
<line x1="122.5" y1="279.5" x2="122.5" y2="461" stroke="#000" stroke-width="1"/>
<line x1="173.5" y1="279.5" x2="173.5" y2="461" stroke="#000" stroke-width="1"/>
<line x1="302.5" y1="279.5" x2="302.5" y2="461" stroke="#000" stroke-width="1"/>
<line x1="391.5" y1="279.5" x2="391.5" y2="461" stroke="#000" stroke-width="1"/>
<line x1="480.5" y1="279.5" x2="480.5" y2="461" stroke="#000" stroke-width="1"/>
<line x1="569.5" y1="279.5" x2="569.5" y2="461" stroke="#000" stroke-width="1"/>
<line x1="658.5" y1="279.5" x2="658.5" y2="461" stroke="#000" stroke-width="1"/>
<text x="124.6" y="295.0" font-size="12.5" fill="#000" font-weight="bold" textLength="15.0" lengthAdjust="spacingAndGlyphs">№</text>
<text x="224.5" y="295.0" font-size="12" fill="#000" font-weight="bold">ФИО</text>
<text x="326.4" y="295.0" font-size="12" fill="#000" font-weight="bold">Ставка</text>
<text x="395.0" y="295.0" font-size="12" fill="#000" font-weight="bold" textLength="82.0" lengthAdjust="spacingAndGlyphs">Рабочие дни</text>
<text x="490.1" y="295.0" font-size="12" fill="#000" font-weight="bold" textLength="69.7" lengthAdjust="spacingAndGlyphs">Выходные</text>
<text x="586.2" y="295.0" font-size="12" fill="#000" font-weight="bold">Зарплата</text>
<text x="163.7" y="314.7" font-size="12" fill="#000" font-weight="bold">1</text>
<text x="211.5" y="314.7" font-size="12.7" fill="#000" textLength="88.2" lengthAdjust="spacingAndGlyphs">Васильев В. В.</text>
<text x="362.1" y="314.7" font-size="12.25" fill="#000">1500</text>
<text x="463.6" y="314.7" font-size="12.25" fill="#000">25</text>
<text x="559.2" y="314.7" font-size="12.25" fill="#000">6</text>
<text x="621.4" y="314.7" font-size="12.25" fill="#000">37500</text>
<text x="163.7" y="334.7" font-size="12" fill="#000" font-weight="bold">2</text>
<text x="209.3" y="334.7" font-size="12.7" fill="#000" textLength="90.4" lengthAdjust="spacingAndGlyphs">Григорьев Г. Г.</text>
<text x="362.1" y="334.7" font-size="12.25" fill="#000">1650</text>
<text x="463.6" y="334.7" font-size="12.25" fill="#000">24</text>
<text x="559.2" y="334.7" font-size="12.25" fill="#000">7</text>
<text x="621.4" y="334.7" font-size="12.25" fill="#000">39600</text>
<text x="163.7" y="354.7" font-size="12" fill="#000" font-weight="bold">3</text>
<text x="201.0" y="354.7" font-size="12.7" fill="#000" textLength="98.7" lengthAdjust="spacingAndGlyphs">Дмитриев Д. Д.</text>
<text x="362.1" y="354.7" font-size="12.25" fill="#000">1400</text>
<text x="463.6" y="354.7" font-size="12.25" fill="#000">26</text>
<text x="559.2" y="354.7" font-size="12.25" fill="#000">5</text>
<text x="621.4" y="354.7" font-size="12.25" fill="#000">36400</text>
<text x="163.7" y="374.7" font-size="12" fill="#000" font-weight="bold">4</text>
<text x="233.2" y="374.7" font-size="12.7" fill="#000" textLength="66.5" lengthAdjust="spacingAndGlyphs">Егоров Е. Е</text>
<text x="362.1" y="374.7" font-size="12.25" fill="#000">1600</text>
<text x="463.6" y="374.7" font-size="12.25" fill="#000">24</text>
<text x="559.2" y="374.7" font-size="12.25" fill="#000">7</text>
<text x="621.4" y="374.7" font-size="12.25" fill="#000">38400</text>
<text x="163.7" y="394.7" font-size="12" fill="#000" font-weight="bold">5</text>
<text x="219.7" y="394.7" font-size="12.7" fill="#000" textLength="80.0" lengthAdjust="spacingAndGlyphs">Иванов И. И.</text>
<text x="362.1" y="394.7" font-size="12.25" fill="#000">1800</text>
<text x="463.6" y="394.7" font-size="12.25" fill="#000">23</text>
<text x="559.2" y="394.7" font-size="12.25" fill="#000">8</text>
<text x="621.4" y="394.7" font-size="12.25" fill="#000">41400</text>
<text x="163.7" y="414.7" font-size="12" fill="#000" font-weight="bold">6</text>
<text x="197.2" y="414.7" font-size="12.7" fill="#000" textLength="102.5" lengthAdjust="spacingAndGlyphs">Михайлов М. М.</text>
<text x="362.1" y="414.7" font-size="12.25" fill="#000">1450</text>
<text x="463.6" y="414.7" font-size="12.25" fill="#000">26</text>
<text x="559.2" y="414.7" font-size="12.25" fill="#000">5</text>
<text x="621.4" y="414.7" font-size="12.25" fill="#000">37700</text>
<text x="163.7" y="434.7" font-size="12" fill="#000" font-weight="bold">7</text>
<text x="222.4" y="434.7" font-size="12.7" fill="#000" textLength="77.3" lengthAdjust="spacingAndGlyphs">Петров П. П.</text>
<text x="362.1" y="434.7" font-size="12.25" fill="#000">1550</text>
<text x="463.6" y="434.7" font-size="12.25" fill="#000">25</text>
<text x="559.2" y="434.7" font-size="12.25" fill="#000">6</text>
<text x="621.4" y="434.7" font-size="12.25" fill="#000">38750</text>
<text x="124.6" y="456.0" font-size="12" fill="#000" font-weight="bold" textLength="45.5" lengthAdjust="spacingAndGlyphs">Сумма</text>
<rect x="33" y="545" width="978" height="28" fill="#e6e6e6"/>
<line x1="33" y1="545.5" x2="1011" y2="545.5" stroke="#c6c6c6" stroke-width="1"/>
<path d="M64.5 555 l-3.5 3.5 l3.5 3.5 z" fill="#c8c8c8" stroke="none" stroke-width="1"/>
<path d="M90 555 l3.5 3.5 l-3.5 3.5 z" fill="#c8c8c8" stroke="none" stroke-width="1"/>
<path d="M133.5 545.5 v24 h59 v-24" fill="#fff" stroke="#aaa"/>
<rect x="134" y="545" width="58" height="1" fill="#fff"/>
<rect x="133" y="567.2" width="60" height="2.4" fill="#217346"/>
<text x="145.0" y="564.0" font-size="13" fill="#217346" font-weight="bold" textLength="36.0" lengthAdjust="spacingAndGlyphs">Лист1</text>
<circle cx="233.8" cy="558.8" r="7.5" fill="none" stroke="#666" stroke-width="1.2"/>
<line x1="229.5" y1="558.8" x2="238" y2="558.8" stroke="#666" stroke-width="1.4"/>
<line x1="233.8" y1="554.5" x2="233.8" y2="563" stroke="#666" stroke-width="1.4"/>
<rect x="620.5" y="554" width="1.5" height="1.5" fill="#aaa"/>
<rect x="620.5" y="558" width="1.5" height="1.5" fill="#aaa"/>
<rect x="620.5" y="562" width="1.5" height="1.5" fill="#aaa"/>
<rect x="637.5" y="552.5" width="310" height="14" fill="#fff" stroke="#c6c6c6"/>
<path d="M645 556 l-3.5 3.5 l3.5 3.5 z" fill="#777" stroke="none" stroke-width="1"/>
<rect x="948" y="552" width="29" height="15" fill="#dcdcdc"/>
<rect x="977.5" y="552.5" width="14" height="14" fill="#fff" stroke="#c6c6c6"/>
<path d="M983 556 l3.5 3.5 l-3.5 3.5 z" fill="#555" stroke="none" stroke-width="1"/>
<rect x="990" y="240" width="21" height="305" fill="#e6e6e6"/>
<rect x="993.5" y="242.5" width="14" height="14" fill="#fff" stroke="#c6c6c6"/>
<path d="M996.5 252 l4 -4 l4 4 z" fill="#666" stroke="none" stroke-width="1"/>
<rect x="993" y="257" width="15" height="275" fill="#dadada"/>
<rect x="993.5" y="257.5" width="14" height="189" fill="#fff" stroke="#c6c6c6"/>
<rect x="993.5" y="531.5" width="14" height="13" fill="#fff" stroke="#c6c6c6"/>
<path d="M996.5 536 l4 4 l4 -4 z" fill="#666" stroke="none" stroke-width="1"/>
<rect x="33" y="573" width="978" height="22" fill="#f3f2f1"/>
<line x1="33" y1="573.5" x2="1011" y2="573.5" stroke="#d6d6d6" stroke-width="1"/>
<text x="397.5" y="587.5" font-size="11" fill="#444" textLength="113.0" lengthAdjust="spacingAndGlyphs">Среднее: 38535,71429</text>
<text x="527.5" y="587.5" font-size="11" fill="#444" textLength="72.0" lengthAdjust="spacingAndGlyphs">Количество: 7</text>
<text x="617.4" y="587.5" font-size="11" fill="#444" textLength="75.6" lengthAdjust="spacingAndGlyphs">Сумма: 269750</text>
<rect x="716" y="574" width="33" height="21" fill="#cfcdcb"/>
<rect x="723.5" y="577.5" width="12" height="12" fill="none" stroke="#707070" stroke-width="1.1"/>
<line x1="723.5" y1="581.5" x2="735.5" y2="581.5" stroke="#707070" stroke-width="1.1"/>
<line x1="723.5" y1="585.5" x2="735.5" y2="585.5" stroke="#707070" stroke-width="1.1"/>
<line x1="727.5" y1="577.5" x2="727.5" y2="589.5" stroke="#707070" stroke-width="1.1"/>
<line x1="731.5" y1="577.5" x2="731.5" y2="589.5" stroke="#707070" stroke-width="1.1"/>
<rect x="761.5" y="577.5" width="13" height="12" fill="none" stroke="#707070" stroke-width="1.1"/>
<rect x="764.5" y="579.5" width="7" height="8" fill="none" stroke="#707070" stroke-width="1.1"/>
<line x1="766" y1="581.5" x2="770" y2="581.5" stroke="#707070" stroke-width="1"/>
<line x1="766" y1="583.5" x2="770" y2="583.5" stroke="#707070" stroke-width="1"/>
<line x1="766" y1="585.5" x2="770" y2="585.5" stroke="#707070" stroke-width="1"/>
<path d="M799.5 577.5 h13 v12 h-13 z M802.5 577.5 v7 h5 v-7 M804.8 577.5 v7 M799.5 584.5 h3" fill="none" stroke="#707070" stroke-width="1.1"/>
<line x1="830" y1="584.5" x2="836" y2="584.5" stroke="#444" stroke-width="1.6"/>
<line x1="840" y1="584.5" x2="941" y2="584.5" stroke="#999" stroke-width="1"/>
<rect x="888" y="578.2" width="5.2" height="10.7" fill="#777"/>
<line x1="943.5" y1="584.5" x2="950.5" y2="584.5" stroke="#555" stroke-width="1.6"/>
<line x1="947" y1="581" x2="947" y2="588" stroke="#555" stroke-width="1.6"/>
<text x="963.0" y="587.0" font-size="11.5" fill="#444" textLength="28.8" lengthAdjust="spacingAndGlyphs">100 %</text>
<defs><filter id="sh" x="-30%" y="-30%" width="160%" height="160%"><feGaussianBlur in="SourceAlpha" stdDeviation="2.5"/><feOffset dx="1.5" dy="2"/><feComponentTransfer><feFuncA type="linear" slope="0.5"/></feComponentTransfer><feMerge><feMergeNode/><feMergeNode in="SourceGraphic"/></feMerge></filter></defs>
<g filter="url(#sh)">
<rect x="565.35" y="296.35" width="97.30" height="147.25" rx="6.75" fill="none" stroke="#fff" stroke-width="7.40"/>
<rect x="564.6" y="295.6" width="98.8" height="148.75" rx="7.5" fill="none" stroke="#f00000" stroke-width="3.3"/>
<rect x="603.30" y="570.20" width="102.40" height="25.00" rx="7.20" fill="none" stroke="#fff" stroke-width="6.30"/>
<rect x="603" y="569.9" width="103" height="25.6" rx="7.5" fill="none" stroke="#f00000" stroke-width="3.3"/>
<path d="M630.6 446.6 L656.5 567" fill="none" stroke="#fff" stroke-width="6" stroke-linecap="round"/>
<path d="M647.4 557 L657.3 571.2 L660.2 554.1" fill="none" stroke="#fff" stroke-width="6" stroke-linecap="round" stroke-linejoin="miter" stroke-miterlimit="8"/>
<path d="M630.6 446.6 L656.5 567" fill="none" stroke="#f00000" stroke-width="3.6" stroke-linecap="round"/>
<path d="M647.4 557 L657.3 571.2 L660.2 554.1" fill="none" stroke="#f00000" stroke-width="3.6" stroke-linecap="round" stroke-linejoin="miter" stroke-miterlimit="8"/>
</g>
</svg>
</body></html>
